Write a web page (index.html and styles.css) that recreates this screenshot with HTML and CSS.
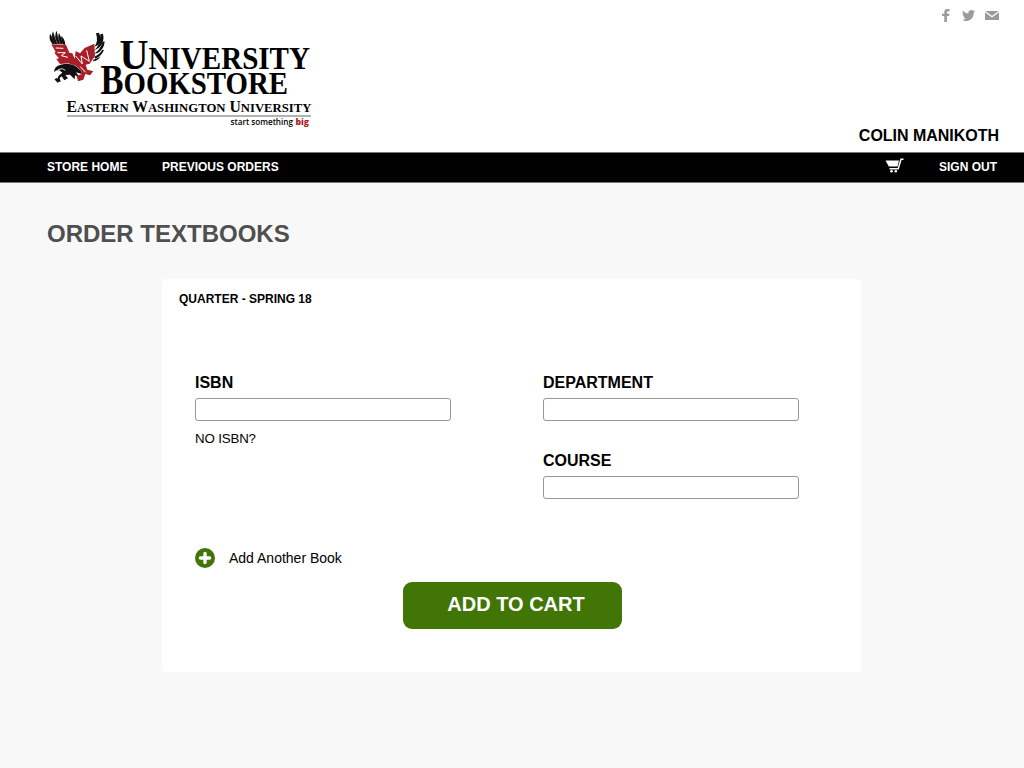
FILE: index.html
```html
<!DOCTYPE html>
<html lang="en">
<head>
<meta charset="utf-8">
<title>Order Textbooks</title>
<link rel="stylesheet" href="styles.css">
</head>
<body>
<header class="header">
  <a class="logo">
    <svg width="270" height="104" viewBox="46 28 270 104" role="img" aria-label="University Bookstore">
      <g transform="translate(40 20) scale(.33333)">
        <g fill="#111">
          <path d="M37 72Q24 55 31 41Q40 56 44 72Z"/>
          <path d="M44 72Q31 49 39 34Q45 54 52 72Z"/>
          <path d="M53 72Q40 47 50 32Q53 51 60 72Z"/>
          <path d="M61 72Q51 50 57 39Q66 54 68 72Z"/>
          <path d="M68 73Q62 57 64 48Q77 60 75 75Z"/>
          <path d="M163 80Q176 65 168 40L177 38Q186 59 175 75Z"/>
          <path d="M163 91Q181 76 181 43L189 41Q195 66 177 83Z"/>
          <path d="M163 101Q183 86 188 65L194 64Q193 88 173 99Z"/>
          <path d="M163 110Q181 101 187 89L192 90Q184 109 166 116Z"/>
          <path d="M160 119Q174 116 181 109Q176 122 159 124Z"/>
          <path d="M42 156Q43 138 62 134Q91 127 108 139L124 153L125 162L108 157L119 172L105 166L104 178L90 164L76 165L84 175L73 181L65 169L59 174L62 186L50 181L56 167L67 158L58 151L50 151Z"/>
          <path d="M43 178L52 173L51 180L61 183L53 188Z"/>
        </g>
        <path fill="#a81f29" d="M34 73L78 74L88 98L97 100L104 116L107 93L120 100L134 84L163 71L165 108L149 131L137 134L142 149L160 154L150 166L136 162L130 179L114 184L110 168L124 163L124 152L108 137L84 130L60 132L49 117L57 115L43 99L47 96Z"/>
        <path fill="none" stroke="#fff" stroke-width="3" d="M47 84L70 85M52 98L76 98L64 107L84 112M107 108L127 132L123 108L148 124L140 91M121 140L137 157"/>
        <path fill="none" stroke="#fff" stroke-width="2.500" d="M54 149L67 146L76 151"/>
      </g>
      <g class="logo-serif">
        <text x="119.500" y="69.300" font-size="43" textLength="29" lengthAdjust="spacingAndGlyphs">U</text>
        <text x="148.500" y="69.300" font-size="30.500" textLength="161.500" lengthAdjust="spacingAndGlyphs">NIVERSITY</text>
        <text x="100.500" y="94" font-size="42" textLength="23" lengthAdjust="spacingAndGlyphs">B</text>
        <text x="123.500" y="94" font-size="30.500" textLength="164.500" lengthAdjust="spacingAndGlyphs">OOKSTORE</text>
        <text x="66.500" y="112.200" font-size="16" textLength="245" lengthAdjust="spacingAndGlyphs">E<tspan font-size="13">ASTERN</tspan> W<tspan font-size="13">ASHINGTON</tspan> U<tspan font-size="13">NIVERSITY</tspan></text>
      </g>
      <path d="M67 116H311" stroke="#999" stroke-width="1.600"/>
      <text class="logo-tag" x="230.500" y="124.800" textLength="62.500" lengthAdjust="spacingAndGlyphs">start something</text>
      <text class="logo-tag logo-big" x="295.500" y="124.800" textLength="13.500" lengthAdjust="spacingAndGlyphs">big</text>
    </svg>
  </a>
  <div class="account">
    <div class="social">
      <svg width="8" height="13" viewBox="0 0 8 13"><path d="M2.300 13V7H0V4.700H2.300V3.300Q2.300 0 5.500 0H7.500V2.300H6Q4.900 2.300 4.900 3.500V4.700H7.500L7.100 7H4.900V13Z"/></svg>
      <svg width="13" height="11" viewBox="0 0 13 11"><path d="M13 1.300L11.700 2.700Q11.700 7.500 8.200 9.800Q4 12.200 0 9.800Q2.300 9.900 3.900 8.600Q2 8.300 1.500 6.700H2.600Q.6 5.800.5 4L1.700 4.300Q-.2 2.700.9.700Q3.300 3.400 6.400 3.500Q6.100 1.300 7.600.4Q9.400-.5 10.900.8L12.600.2L11.700 1.500Z"/></svg>
      <svg width="14" height="9" viewBox="0 0 14 9"><path d="M0 0H14V9H0Z"/><path class="flap" d="M0 .5L7 5.700L14 .5"/></svg>
    </div>
    <div class="user">COLIN MANIKOTH</div>
  </div>
</header>
<nav class="nav">
  <a>STORE HOME</a>
  <a>PREVIOUS ORDERS</a>
  <svg class="cart" width="19" height="15" viewBox="0 0 19 15"><path d="M.5 2.500H14L12.500 8.500H3.800Z" fill="#fff"/><path d="M18.500 1.200H16L13.200 10.800H4.500" fill="none" stroke="#fff" stroke-width="1.500"/><circle cx="6.500" cy="13.200" r="1.300" fill="#fff"/><circle cx="10.800" cy="13.200" r="1.300" fill="#fff"/></svg>
  <a>SIGN OUT</a>
</nav>
<main class="main">
  <h1>ORDER TEXTBOOKS</h1>
  <form class="card">
    <h2>QUARTER - SPRING 18</h2>
    <div class="fields">
      <div class="column">
        <label class="field">ISBN<input type="text"></label>
        <a class="hint">NO ISBN?</a>
      </div>
      <div class="column">
        <label class="field">DEPARTMENT<input type="text"></label>
        <label class="field">COURSE<input type="text"></label>
      </div>
    </div>
    <a class="add">
      <svg width="20" height="20" viewBox="0 0 20 20"><circle cx="10" cy="10" r="10" fill="#417505"/><path d="M10 5.400V14.600M5.400 10H14.600" stroke="#fff" stroke-width="3.400" stroke-linecap="round"/></svg>
      Add Another Book
    </a>
    <button type="button" class="submit">ADD TO CART</button>
  </form>
</main>
</body>
</html>
```
FILE: styles.css
```css
* { box-sizing: border-box; }
body {
  margin: 0;
  min-height: 768px;
  background: #f8f8f8;
  color: #000;
  font-family: "Liberation Sans", Arial, sans-serif;
}
.header {
  display: flex;
  justify-content: space-between;
  height: 152px;
  padding: 0 25px 0 46px;
  background: #fff;
}
.logo { padding-top: 28px; }
.logo svg { display: block; }
.logo-serif { font-family: "Liberation Serif", serif; font-weight: bold; }
.logo-tag { font: 600 9px "Open Sans", sans-serif; }
.logo-big { font-weight: 800; fill: #a81f29; }
.account {
  display: flex;
  flex-direction: column;
  justify-content: space-between;
  align-items: flex-end;
  padding: 9px 0 7px;
}
.social { display: flex; align-items: center; gap: 10px; height: 13px; fill: #9b9b9b; }
.social svg:first-child { margin-right: 2px; }
.social .flap { fill: none; stroke: #fff; stroke-width: 1.3; }
.user { font-size: 16px; font-weight: bold; line-height: 18px; letter-spacing: -0.02px; }
.nav {
  display: flex;
  align-items: center;
  gap: 35px;
  height: 31px;
  padding: 0 27px 2px 47px;
  border: solid #777;
  border-width: 1px 0;
  background: #000;
  color: #fff;
  font-size: 12px;
  font-weight: bold;
  line-height: 14px;
}
.nav a:first-child { width: 80px; white-space: nowrap; }
.cart { margin: -3px 0 0 auto; }
.main { padding: 37px 47px 0; }
h1 { margin: 0; color: #4f4f4f; font-size: 24px; line-height: 28px; }
.card {
  display: flex;
  flex-direction: column;
  width: 699px;
  height: 393px;
  margin: 31px 0 0 115px;
  padding: 13px 17px;
  border-radius: 4px;
  background: #fff;
}
h2 { margin: 0; font-size: 12px; line-height: 14px; }
.fields { display: flex; gap: 92px; height: 174px; margin: 68px 0 0 16px; }
.column { display: flex; flex-direction: column; width: 256px; }
.field { display: flex; flex-direction: column; gap: 6px; font-size: 16px; font-weight: bold; line-height: 18px; }
.field + .field { margin-top: 31px; }
input { width: 256px; height: 23px; border: 1px solid #979797; border-radius: 3px; background: #fff; }
.hint { margin-top: 10px; font-size: 13.3px; line-height: 16px; letter-spacing: -0.15px; }
.add { display: flex; align-items: center; gap: 14px; height: 20px; margin-left: 16px; font-size: 14px; line-height: 20px; }
.submit {
  width: 219px;
  height: 47px;
  margin: 14px 0 0 224px;
  padding: 0 0 3px 7px;
  border: 0;
  border-radius: 9px;
  background: #417505;
  color: #fff;
  font: bold 20px "Liberation Sans", Arial, sans-serif;
}
```
